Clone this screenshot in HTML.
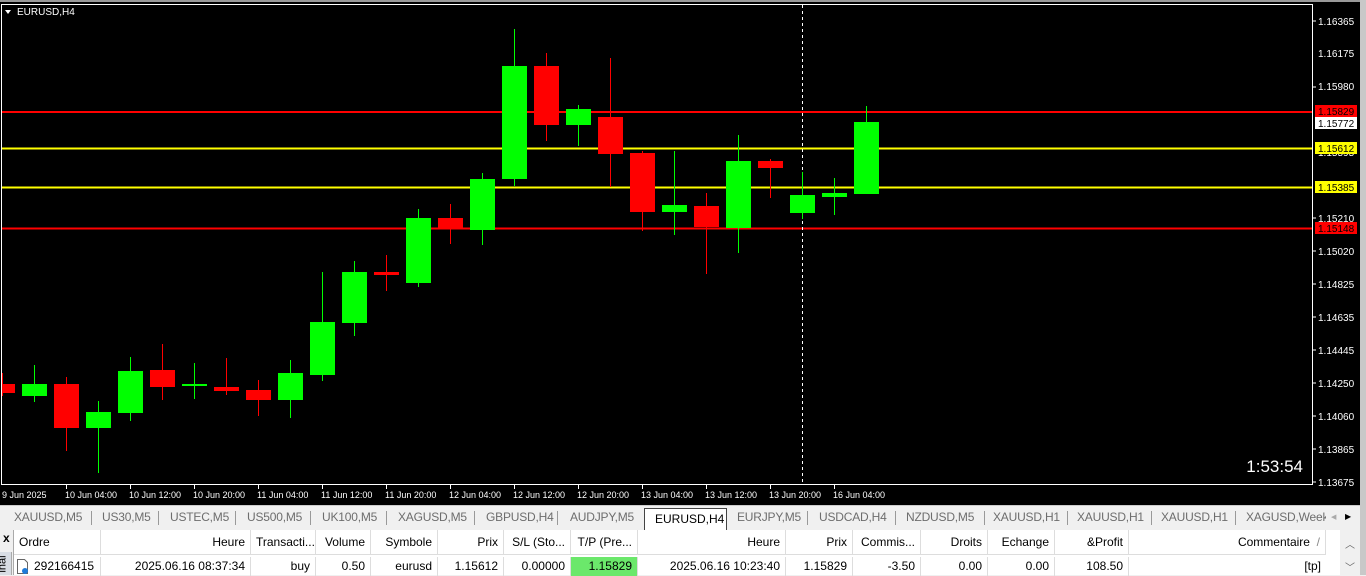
<!DOCTYPE html>
<html><head><meta charset="utf-8"><style>
*{margin:0;padding:0;box-sizing:border-box}
body{width:1366px;height:575px;overflow:hidden;background:#f0f0f0;font-family:"Liberation Sans",sans-serif;font-size:12px;position:relative}
.tabs{position:absolute;left:0;top:505px;width:1366px;height:23px;background:#f0f0f0;border-top:1px solid #ccc}
.tab{position:absolute;top:4px;color:#6d6d6d;font-size:12px;letter-spacing:-0.2px}
.sep{position:absolute;top:5px;width:1px;height:14px;background:#999}
.act{position:absolute;left:644px;top:2px;width:83px;height:22px;background:#fff;border:1px solid #444;border-bottom:none;color:#000;font-size:12px;padding:3px 0 0 10px}
.tbl{position:absolute;left:13px;top:530px;width:1327px;height:45px;background:#fff;border-left:1px solid #aaa}
.c{position:absolute;height:25px;line-height:25px;border-right:1px solid #ddd;color:#000;white-space:nowrap;padding:0 5px;overflow:hidden}
.r .c{height:19px;line-height:19px;top:27px}
.h .c{top:0;border-bottom:1px solid #ddd}
</style></head><body>
<svg width="1366" height="505" style="position:absolute;left:0;top:0" xmlns="http://www.w3.org/2000/svg" font-family="Liberation Sans,sans-serif">
<rect x="0" y="0" width="1366" height="505" fill="#000"/>
<rect x="0" y="0" width="1366" height="2" fill="#999"/>
<rect x="1360" y="0" width="6" height="505" fill="#c8c8c8"/>
<rect x="1.5" y="4.5" width="1311" height="480" fill="none" stroke="#fff" stroke-width="1"/>
<polygon points="5,10 11,10 8,14" fill="#fff"/>
<text x="17" y="15" fill="#fff" font-size="10">EURUSD,H4</text>
<g stroke-width="2">
<line x1="2" y1="112" x2="1312" y2="112" stroke="#f00"/>
<line x1="2" y1="148.5" x2="1312" y2="148.5" stroke="#ff0"/>
<line x1="2" y1="187.5" x2="1312" y2="187.5" stroke="#ff0"/>
<line x1="2" y1="228.5" x2="1312" y2="228.5" stroke="#f00"/>
</g>
<line x1="802.5" y1="5" x2="802.5" y2="484" stroke="#fff" stroke-dasharray="3,3"/>
<g id="candles">
<line x1="2.5" y1="373" x2="2.5" y2="396" stroke="#f00"/><rect x="2" y="384" width="13" height="9" fill="#f00"/>
<line x1="34.5" y1="365" x2="34.5" y2="402" stroke="#0f0"/><rect x="22" y="384" width="25" height="12" fill="#0f0"/>
<line x1="66.5" y1="377" x2="66.5" y2="451" stroke="#f00"/><rect x="54" y="384" width="25" height="44" fill="#f00"/>
<line x1="98.5" y1="401" x2="98.5" y2="473" stroke="#0f0"/><rect x="86" y="412" width="25" height="16" fill="#0f0"/>
<line x1="130.5" y1="357" x2="130.5" y2="421" stroke="#0f0"/><rect x="118" y="371" width="25" height="42" fill="#0f0"/>
<line x1="162.5" y1="344" x2="162.5" y2="400" stroke="#f00"/><rect x="150" y="370" width="25" height="17" fill="#f00"/>
<line x1="194.5" y1="363" x2="194.5" y2="399" stroke="#0f0"/><rect x="182" y="384" width="25" height="2" fill="#0f0"/>
<line x1="226.5" y1="358" x2="226.5" y2="395" stroke="#f00"/><rect x="214" y="387" width="25" height="4" fill="#f00"/>
<line x1="258.5" y1="380" x2="258.5" y2="416" stroke="#f00"/><rect x="246" y="390" width="25" height="10" fill="#f00"/>
<line x1="290.5" y1="360" x2="290.5" y2="418" stroke="#0f0"/><rect x="278" y="373" width="25" height="27" fill="#0f0"/>
<line x1="322.5" y1="272" x2="322.5" y2="381" stroke="#0f0"/><rect x="310" y="322" width="25" height="53" fill="#0f0"/>
<line x1="354.5" y1="261" x2="354.5" y2="336" stroke="#0f0"/><rect x="342" y="272" width="25" height="51" fill="#0f0"/>
<line x1="386.5" y1="255" x2="386.5" y2="291" stroke="#f00"/><rect x="374" y="272" width="25" height="3" fill="#f00"/>
<line x1="418.5" y1="209" x2="418.5" y2="287" stroke="#0f0"/><rect x="406" y="218" width="25" height="65" fill="#0f0"/>
<line x1="450.5" y1="204" x2="450.5" y2="244" stroke="#f00"/><rect x="438" y="218" width="25" height="11" fill="#f00"/>
<line x1="482.5" y1="173" x2="482.5" y2="245" stroke="#0f0"/><rect x="470" y="179" width="25" height="51" fill="#0f0"/>
<line x1="514.5" y1="29" x2="514.5" y2="186" stroke="#0f0"/><rect x="502" y="66" width="25" height="113" fill="#0f0"/>
<line x1="546.5" y1="53" x2="546.5" y2="141" stroke="#f00"/><rect x="534" y="66" width="25" height="59" fill="#f00"/>
<line x1="578.5" y1="105" x2="578.5" y2="146" stroke="#0f0"/><rect x="566" y="109" width="25" height="16" fill="#0f0"/>
<line x1="610.5" y1="58" x2="610.5" y2="187" stroke="#f00"/><rect x="598" y="117" width="25" height="37" fill="#f00"/>
<line x1="642.5" y1="151" x2="642.5" y2="231" stroke="#f00"/><rect x="630" y="153" width="25" height="59" fill="#f00"/>
<line x1="674.5" y1="151" x2="674.5" y2="235" stroke="#0f0"/><rect x="662" y="205" width="25" height="7" fill="#0f0"/>
<line x1="706.5" y1="193" x2="706.5" y2="274" stroke="#f00"/><rect x="694" y="206" width="25" height="21" fill="#f00"/>
<line x1="738.5" y1="135" x2="738.5" y2="253" stroke="#0f0"/><rect x="726" y="161" width="25" height="67" fill="#0f0"/>
<line x1="770.5" y1="159" x2="770.5" y2="198" stroke="#f00"/><rect x="758" y="161" width="25" height="7" fill="#f00"/>
<line x1="802.5" y1="172" x2="802.5" y2="219" stroke="#0f0"/><rect x="790" y="195" width="25" height="18" fill="#0f0"/>
<line x1="834.5" y1="178" x2="834.5" y2="215" stroke="#0f0"/><rect x="822" y="193" width="25" height="4" fill="#0f0"/>
<line x1="866.5" y1="106" x2="866.5" y2="194" stroke="#0f0"/><rect x="854" y="122" width="25" height="72" fill="#0f0"/>
</g>
<g fill="#fff" font-size="10">
<text x="1318" y="25">1.16365</text>
<text x="1318" y="57">1.16175</text>
<text x="1318" y="90">1.15980</text>
<text x="1318" y="156">1.15595</text>
<text x="1318" y="222">1.15210</text>
<text x="1318" y="255">1.15020</text>
<text x="1318" y="288">1.14825</text>
<text x="1318" y="321">1.14635</text>
<text x="1318" y="354">1.14445</text>
<text x="1318" y="387">1.14250</text>
<text x="1318" y="420">1.14060</text>
<text x="1318" y="453">1.13865</text>
<text x="1318" y="486">1.13675</text>
</g>
<g stroke="#fff"><line x1="1313" y1="21" x2="1316" y2="21"/><line x1="1313" y1="87" x2="1316" y2="87"/><line x1="1313" y1="218" x2="1316" y2="218"/><line x1="1313" y1="251" x2="1316" y2="251"/><line x1="1313" y1="284" x2="1316" y2="284"/><line x1="1313" y1="317" x2="1316" y2="317"/><line x1="1313" y1="350" x2="1316" y2="350"/><line x1="1313" y1="383" x2="1316" y2="383"/><line x1="1313" y1="416" x2="1316" y2="416"/><line x1="1313" y1="449" x2="1316" y2="449"/><line x1="1313" y1="482" x2="1316" y2="482"/></g>
<rect x="1315" y="105" width="42" height="12" fill="#f00"/><text x="1318" y="115" fill="#000" font-size="10">1.15829</text>
<rect x="1315" y="117" width="42" height="12" fill="#fff"/><text x="1318" y="127" fill="#000" font-size="10">1.15772</text>
<rect x="1315" y="142" width="42" height="12" fill="#ff0"/><text x="1318" y="152" fill="#000" font-size="10">1.15612</text>
<rect x="1315" y="181" width="42" height="12" fill="#ff0"/><text x="1318" y="191" fill="#000" font-size="10">1.15385</text>
<rect x="1315" y="222" width="42" height="12" fill="#f00"/><text x="1318" y="232" fill="#000" font-size="10">1.15148</text>
<text x="1303" y="472" fill="#fff" font-size="17" text-anchor="end">1:53:54</text>
<g fill="#fff" font-size="9">
<text x="2" y="498">9 Jun 2025</text><text x="65" y="498">10 Jun 04:00</text><text x="129" y="498">10 Jun 12:00</text><text x="193" y="498">10 Jun 20:00</text><text x="257" y="498">11 Jun 04:00</text><text x="321" y="498">11 Jun 12:00</text><text x="385" y="498">11 Jun 20:00</text><text x="449" y="498">12 Jun 04:00</text><text x="513" y="498">12 Jun 12:00</text><text x="577" y="498">12 Jun 20:00</text><text x="641" y="498">13 Jun 04:00</text><text x="705" y="498">13 Jun 12:00</text><text x="769" y="498">13 Jun 20:00</text><text x="833" y="498">16 Jun 04:00</text>
</g>
<g stroke="#fff"><line x1="66.5" y1="485" x2="66.5" y2="489"/><line x1="130.5" y1="485" x2="130.5" y2="489"/><line x1="194.5" y1="485" x2="194.5" y2="489"/><line x1="258.5" y1="485" x2="258.5" y2="489"/><line x1="322.5" y1="485" x2="322.5" y2="489"/><line x1="386.5" y1="485" x2="386.5" y2="489"/><line x1="450.5" y1="485" x2="450.5" y2="489"/><line x1="514.5" y1="485" x2="514.5" y2="489"/><line x1="578.5" y1="485" x2="578.5" y2="489"/><line x1="642.5" y1="485" x2="642.5" y2="489"/><line x1="706.5" y1="485" x2="706.5" y2="489"/><line x1="770.5" y1="485" x2="770.5" y2="489"/><line x1="834.5" y1="485" x2="834.5" y2="489"/></g>
</svg>
<div class="tabs">
<span class="tab" style="left:14px">XAUUSD,M5</span><span class="sep" style="left:91px"></span>
<span class="tab" style="left:102px">US30,M5</span><span class="sep" style="left:158px"></span>
<span class="tab" style="left:170px">USTEC,M5</span><span class="sep" style="left:235px"></span>
<span class="tab" style="left:247px">US500,M5</span><span class="sep" style="left:310px"></span>
<span class="tab" style="left:322px">UK100,M5</span><span class="sep" style="left:386px"></span>
<span class="tab" style="left:398px">XAGUSD,M5</span><span class="sep" style="left:474px"></span>
<span class="tab" style="left:486px">GBPUSD,H4</span><span class="sep" style="left:557px"></span>
<span class="tab" style="left:570px">AUDJPY,M5</span>
<div class="act">EURUSD,H4</div>
<span class="tab" style="left:737px">EURJPY,M5</span><span class="sep" style="left:807px"></span>
<span class="tab" style="left:819px">USDCAD,H4</span><span class="sep" style="left:895px"></span>
<span class="tab" style="left:906px">NZDUSD,M5</span><span class="sep" style="left:984px"></span>
<span class="tab" style="left:993px">XAUUSD,H1</span><span class="sep" style="left:1067px"></span>
<span class="tab" style="left:1077px">XAUUSD,H1</span><span class="sep" style="left:1151px"></span>
<span class="tab" style="left:1161px">XAUUSD,H1</span><span class="sep" style="left:1235px"></span>
<span class="tab" style="left:1246px;width:80px;overflow:hidden;white-space:nowrap">XAGUSD,Week</span>
<span class="tab" style="left:1331px;color:#aaa;font-size:7px;top:7px">◀</span>
<span class="tab" style="left:1345px;color:#000;font-size:8px;top:6px">▶</span>
</div>
<div style="position:absolute;left:3px;top:531px;font-weight:bold;font-size:12px">x</div>
<div style="position:absolute;left:0;top:552px;width:12px;height:23px;background:#d8dde4;border-right:1px solid #aaa"><div style="transform:rotate(-90deg);position:absolute;left:-6px;top:6px;font-size:11px">inal</div></div>
<div class="tbl">
<div class="h">
<div class="c" style="left:0;width:87px">Ordre</div>
<div class="c" style="left:87px;width:150px;text-align:right">Heure</div>
<div class="c" style="left:237px;width:65px;text-align:right">Transacti...</div>
<div class="c" style="left:302px;width:55px;text-align:right">Volume</div>
<div class="c" style="left:357px;width:67px;text-align:right">Symbole</div>
<div class="c" style="left:424px;width:66px;text-align:right">Prix</div>
<div class="c" style="left:490px;width:67px;text-align:right">S/L (Sto...</div>
<div class="c" style="left:557px;width:67px;text-align:right">T/P (Pre...</div>
<div class="c" style="left:624px;width:148px;text-align:right">Heure</div>
<div class="c" style="left:772px;width:67px;text-align:right">Prix</div>
<div class="c" style="left:839px;width:68px;text-align:right">Commis...</div>
<div class="c" style="left:907px;width:67px;text-align:right">Droits</div>
<div class="c" style="left:974px;width:67px;text-align:right">Echange</div>
<div class="c" style="left:1041px;width:74px;text-align:right">&amp;Profit</div>
<div class="c" style="left:1115px;width:197px;text-align:right">Commentaire &nbsp;<span style="color:#888">/</span></div>
</div>
<div class="r">
<div class="c" style="left:0;width:87px;padding-left:20px">292166415</div>
<div class="c" style="left:87px;width:150px;text-align:right">2025.06.16 08:37:34</div>
<div class="c" style="left:237px;width:65px;text-align:right">buy</div>
<div class="c" style="left:302px;width:55px;text-align:right">0.50</div>
<div class="c" style="left:357px;width:67px;text-align:right">eurusd</div>
<div class="c" style="left:424px;width:66px;text-align:right">1.15612</div>
<div class="c" style="left:490px;width:67px;text-align:right">0.00000</div>
<div class="c" style="left:557px;width:67px;text-align:right;background:#6be86b">1.15829</div>
<div class="c" style="left:624px;width:148px;text-align:right">2025.06.16 10:23:40</div>
<div class="c" style="left:772px;width:67px;text-align:right">1.15829</div>
<div class="c" style="left:839px;width:68px;text-align:right">-3.50</div>
<div class="c" style="left:907px;width:67px;text-align:right">0.00</div>
<div class="c" style="left:974px;width:67px;text-align:right">0.00</div>
<div class="c" style="left:1041px;width:74px;text-align:right">108.50</div>
<div class="c" style="left:1115px;width:197px;text-align:right;border:none">[tp]</div>
</div>
<svg style="position:absolute;left:2px;top:29px" width="14" height="16"><path d="M1.5 .5h7l3 3v11h-10z" fill="#fff" stroke="#666"/><circle cx="9" cy="12" r="3" fill="#1e7ad8"/></svg>
</div>
<div style="position:absolute;left:1340px;top:530px;width:20px;height:45px;background:#f0f0f0;color:#666;font-size:10px;text-align:center"><div style="margin-top:6px">︿</div><div style="margin-top:8px">﹀</div></div>
<div style="position:absolute;left:1360px;top:505px;width:6px;height:70px;background:#c8c8c8"></div>
</body></html>
